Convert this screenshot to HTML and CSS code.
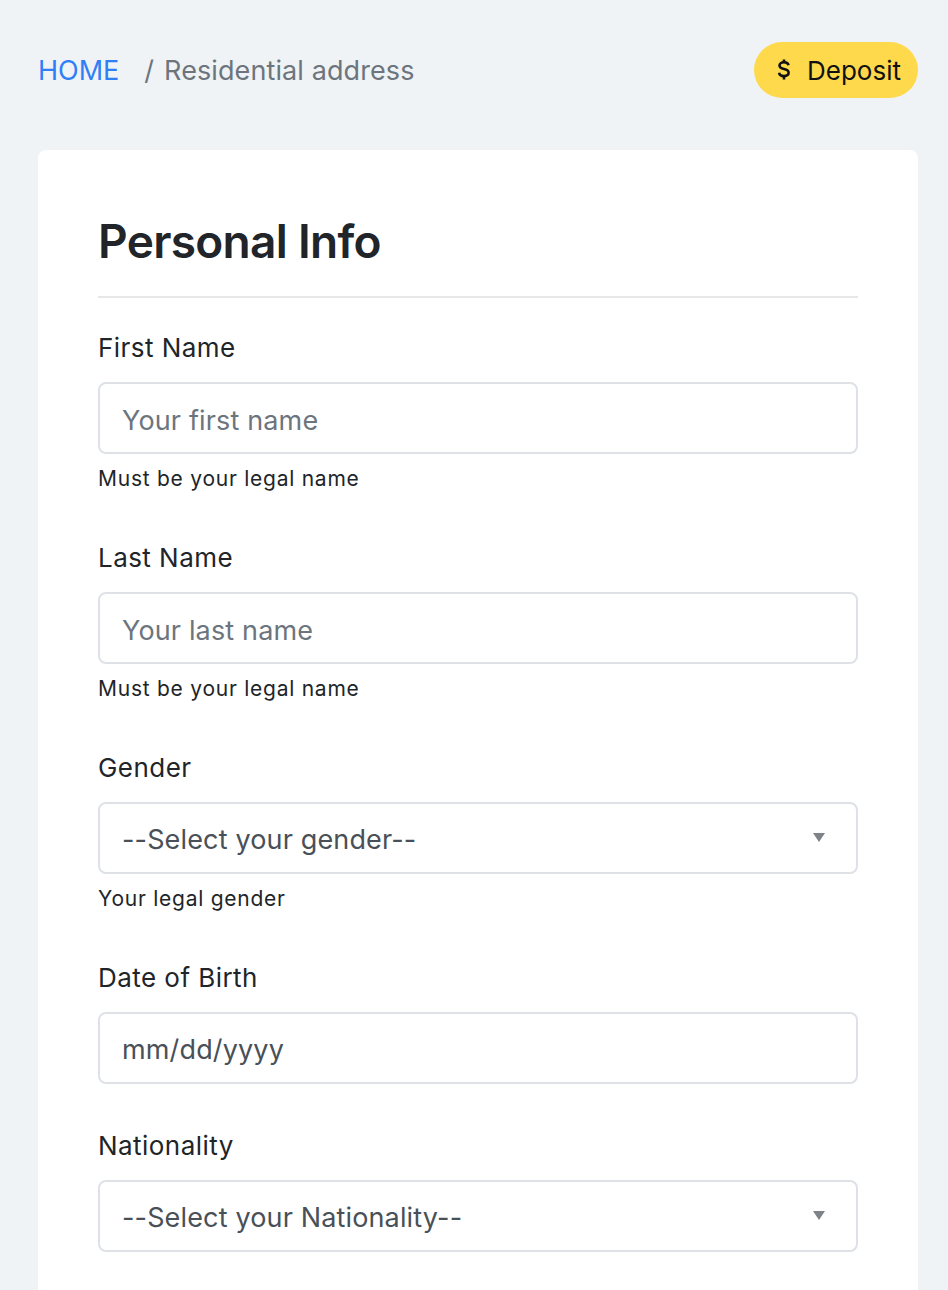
FILE: index.html
```html
<!DOCTYPE html>
<html lang="en">
<head>
<meta charset="utf-8">
<title>Personal Info</title>
<link rel="stylesheet" href="styles.css">
</head>
<body>
<div class="page">
  <header class="topbar">
    <nav class="crumbs">
      <a class="crumb-home" href="#">HOME</a>
      <span class="crumb-sep">/</span>
      <span class="crumb-current">Residential address</span>
    </nav>
    <button class="deposit" type="button">
      <svg class="deposit-icon" viewBox="0 0 14 24" width="14" height="24" aria-hidden="true">
        <path d="M11.5 7.2c-.3-1.8-1.9-2.9-4.5-2.9-2.7 0-4.5 1.3-4.5 3.3 0 2 1.6 2.8 4.5 3.4 3 .6 4.6 1.5 4.6 3.6 0 2.1-1.9 3.5-4.6 3.5-2.8 0-4.6-1.2-4.9-3.3" fill="none" stroke="#111" stroke-width="2.6" stroke-linecap="butt"/>
        <path d="M7 1.5v3M7 18.2v3.3" stroke="#111" stroke-width="2.6"/>
      </svg>
      <span>Deposit</span>
    </button>
  </header>

  <main class="card">
    <h1 class="card-title">Personal Info</h1>
    <hr class="divider">

    <div class="field">
      <label class="field-label" for="first">First Name</label>
      <input class="control" id="first" type="text" placeholder="Your first name">
      <div class="help">Must be your legal name</div>
    </div>

    <div class="field">
      <label class="field-label" for="last">Last Name</label>
      <input class="control" id="last" type="text" placeholder="Your last name">
      <div class="help">Must be your legal name</div>
    </div>

    <div class="field">
      <label class="field-label" for="gender">Gender</label>
      <div class="select-wrap">
        <div class="control select" id="gender">--Select your gender--</div>
        <span class="caret"></span>
      </div>
      <div class="help">Your legal gender</div>
    </div>

    <div class="field field-compact">
      <label class="field-label" for="dob">Date of Birth</label>
      <div class="control value" id="dob">mm/dd/yyyy</div>
    </div>

    <div class="field">
      <label class="field-label" for="nat">Nationality</label>
      <div class="select-wrap">
        <div class="control select" id="nat">--Select your Nationality--</div>
        <span class="caret"></span>
      </div>
    </div>
  </main>
</div>
</body>
</html>
```

FILE: styles.css
```css
* { box-sizing: border-box; }

html, body {
  margin: 0;
  padding: 0;
  background: #f0f3f5;
  font-family: Inter, "Noto Sans", "Liberation Sans", sans-serif;
  color: #212529;
}

.page {
  padding: 42px 30px 0 38px;
}

.topbar {
  display: flex;
  align-items: center;
  justify-content: space-between;
  height: 56px;
}

.crumbs {
  display: flex;
  align-items: center;
  font-size: 27px;
  line-height: 1;
}

.crumb-home {
  color: #2f80f7;
  text-decoration: none;
}

.crumb-sep {
  color: #6c757d;
  margin: 0 10px 0 25px;
}

.crumb-current {
  color: #6c757d;
  letter-spacing: 0.1px;
}

.deposit {
  display: flex;
  align-items: center;
  gap: 16px;
  height: 56px;
  padding: 0 17px 0 23px;
  border: none;
  border-radius: 28px;
  background: #fdd94b;
  font-family: inherit;
  font-size: 26px;
  color: #111;
  cursor: pointer;
}

.deposit-icon { display: block; }

.card {
  margin-top: 52px;
  background: #fff;
  border-radius: 8px;
  padding: 62px 60px 40px;
  min-height: 1200px;
}

.card-title {
  margin: 0;
  font-size: 46px;
  font-weight: 600;
  line-height: 58px;
  letter-spacing: -0.7px;
  color: #212529;
}

.divider {
  border: none;
  border-top: 2px solid #e6e7e8;
  margin: 26px 0 30px;
}

.field {
  margin-bottom: 43px;
}

.field-compact {
  margin-bottom: 42px;
}

.field-label {
  display: block;
  font-size: 26px;
  line-height: 39px;
  margin-bottom: 15px;
  color: #212529;
  letter-spacing: 0.45px;
}

.control {
  display: block;
  width: 100%;
  height: 72px;
  border: 2px solid #dee2e6;
  border-radius: 8px;
  padding: 4px 22px 0;
  font-family: inherit;
  font-size: 27px;
  letter-spacing: 0.15px;
  color: #495057;
  background: #fff;
  line-height: 64px;
  outline: none;
}

.control::placeholder {
  color: #6c757d;
}

.value, .select {
  color: #495057;
}

.select-wrap {
  position: relative;
}

.caret {
  position: absolute;
  right: 33px;
  top: 31px;
  width: 0;
  height: 0;
  border-left: 6px solid transparent;
  border-right: 6px solid transparent;
  border-top: 9px solid #7d8388;
}

.help {
  margin-top: 9px;
  font-size: 21px;
  line-height: 32px;
  letter-spacing: 0.75px;
  color: #212529;
}
```
